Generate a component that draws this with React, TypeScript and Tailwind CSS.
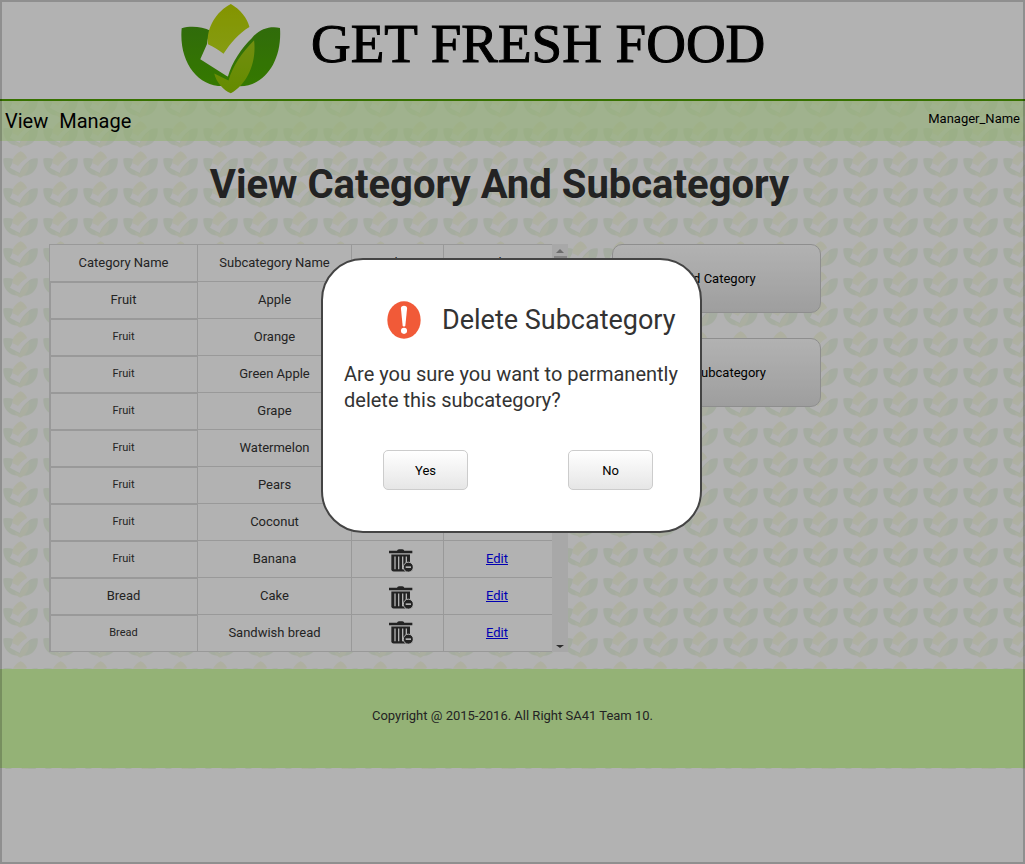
const rows = [
  { category: "Fruit", name: "Apple", large: true },
  { category: "Fruit", name: "Orange" },
  { category: "Fruit", name: "Green Apple" },
  { category: "Fruit", name: "Grape" },
  { category: "Fruit", name: "Watermelon" },
  { category: "Fruit", name: "Pears" },
  { category: "Fruit", name: "Coconut", raised: true },
  { category: "Fruit", name: "Banana" },
  { category: "Bread", name: "Cake", large: true },
  { category: "Bread", name: "Sandwish bread", raised: true },
];

// Leaf shapes of the brand mark, drawn in a 302 x 274 box that starts at 60,6.
function Leaves() {
  return (
    <>
      <path
        fill="url(#wing)"
        d="M64 82 C92 74 125 77 152 90 C144 105 141 118 140 130 L120 175 L203 228 L190 256 C110 258 55 180 64 82 Z"
      />
      <path fill="url(#wing)" d="M360 81 C367 180 315 255 240 257 L200 240 L162 216 L203 228 C215 185 245 140 275 112 C298 84 328 75 360 81 Z" />
      <path fill="url(#crown)" d="M212 9 C240 25 262 52 268 78 C235 98 212 125 190 159 C175 147 160 138 143 130 C138 80 168 32 212 9 Z" />
      <path fill="url(#bud)" d="M282 118 C290 185 262 250 212 278 C190 268 168 245 162 218 L205 239 C218 195 245 155 282 118 Z" />
    </>
  );
}

function Logo() {
  return (
    <svg viewBox="60 6 302 274" className="h-[91px] w-[101px] shrink-0" aria-hidden="true">
      <defs>
        <linearGradient id="wing" x1="0" y1="0" x2="0" y2="1">
          <stop offset="0" stopColor="#469a10" />
          <stop offset="1" stopColor="#4cae00" />
        </linearGradient>
        <linearGradient id="crown" x1="0" y1="0" x2="0" y2="1">
          <stop offset="0" stopColor="#bcd400" />
          <stop offset="1" stopColor="#c0e01a" />
        </linearGradient>
        <linearGradient id="bud" x1="0" y1="0" x2="0" y2="1">
          <stop offset="0" stopColor="#a4cc18" />
          <stop offset="1" stopColor="#90c800" />
        </linearGradient>
      </defs>
      <Leaves />
    </svg>
  );
}

function LeafPattern() {
  return (
    <svg className="absolute inset-0 -z-10 h-full w-full" aria-hidden="true">
      <defs>
        <pattern id="leaves" width="40" height="30" y="-10" patternUnits="userSpaceOnUse">
          <svg x="3" y="0" width="35" height="27" viewBox="60 6 302 274" preserveAspectRatio="none" opacity="0.1">
            <Leaves />
          </svg>
        </pattern>
      </defs>
      <rect width="100%" height="100%" fill="url(#leaves)" />
    </svg>
  );
}

function TrashIcon() {
  return (
    <svg viewBox="0 0 72 68" className="h-[23px] w-6" aria-hidden="true">
      <g fill="#333">
        <path d="M24 5 Q25 0 30 0 H40 Q45 0 46 5 H70 V12 H0 V5 Z" />
        <path d="M7 16 H63 V60 Q63 67 56 67 H14 Q7 67 7 60 Z" />
      </g>
      <path stroke="#fff" strokeWidth="4" d="M18 22 V60 M29 22 V60 M41 22 V60 M52 22 V42" />
      <circle cx="58" cy="54" r="15" fill="#333" stroke="#fff" strokeWidth="3" />
      <path stroke="#fff" strokeWidth="5" d="M50 54 H66" />
    </svg>
  );
}

function Scrollbar() {
  return (
    <div className="flex w-4 flex-col items-center bg-[#f1f1f1]" aria-hidden="true">
      <svg viewBox="0 0 16 12" className="h-3 w-4">
        <path d="M4 9 L8 5 L12 9 Z" fill="#9a9a9a" />
      </svg>
      <div className="h-48 w-[13px] bg-[#c1c1c1]" />
      <svg viewBox="0 0 16 12" className="mt-auto h-3 w-4">
        <path d="M4 5 L8 8 L12 5 Z" fill="#404040" />
      </svg>
    </div>
  );
}

function SubcategoryTable() {
  return (
    <div className="flex w-[519px] shrink-0">
      <table className="w-[503px] table-fixed border-separate border-spacing-0 border-l border-t border-[#dcdcdc] bg-white text-center text-[13px] leading-5">
        <colgroup>
          <col className="w-[148px]" />
          <col className="w-[154px]" />
          <col className="w-[92px]" />
          <col />
        </colgroup>
        <thead>
          <tr className="h-[37px]">
            <th className="border-b border-r border-[#dcdcdc] p-0 font-normal">Category Name</th>
            <th className="border-b border-r border-[#dcdcdc] p-0 font-normal">Subcategory Name</th>
            <th className="border-b border-r border-[#dcdcdc] p-0 font-normal">Delete</th>
            <th className="border-b border-[#dcdcdc] p-0 font-normal">Edit</th>
          </tr>
        </thead>
        <tbody>
          {rows.map((row) => (
            <tr key={row.name} className="h-[37px]">
              <td className={`border-b border-r border-[#dcdcdc] p-0 shadow-[inset_1px_1px_0_#dcdcdc] ${row.large ? "text-[13px]" : "text-[11px]"}`}>
                {row.category}
              </td>
              <td className="border-b border-r border-[#dcdcdc] p-0">{row.name}</td>
              <td className="border-b border-r border-[#dcdcdc] p-0">
                <button
                  type="button"
                  aria-label={`Delete ${row.name}`}
                  className={`block w-full pl-[6px] ${row.raised ? "pb-[2px]" : "pt-[3px]"}`}
                >
                  <span className="flex justify-center">
                    <TrashIcon />
                  </span>
                </button>
              </td>
              <td className="border-b border-[#dcdcdc] p-0 pr-[2px]">
                <a href="#edit" className="text-[#0000ff] underline">
                  Edit
                </a>
              </td>
            </tr>
          ))}
        </tbody>
      </table>
      <Scrollbar />
    </div>
  );
}

function SideButton({ label }: { label: string }) {
  return (
    <button
      type="button"
      className="h-[69px] w-[209px] rounded-[10px] border border-[#cccccc] bg-linear-to-b from-white to-[#e3e3e3] text-[13px] text-black"
    >
      {label}
    </button>
  );
}

function DialogButton({ label }: { label: string }) {
  return (
    <button
      type="button"
      className="h-10 w-[85px] rounded-[5px] border border-[#cccccc] bg-linear-to-b from-white to-[#e6e6e6] pt-[2px] text-[13px] text-black"
    >
      {label}
    </button>
  );
}

function AlertIcon() {
  return (
    <svg viewBox="0 0 100 112" preserveAspectRatio="none" className="h-[38px] w-[34px] shrink-0" aria-hidden="true">
      <ellipse cx="50" cy="56" rx="49" ry="55" fill="#f15a38" />
      <path fill="#fff" d="M41 22 Q41 14 50 14 Q59 14 59 22 L54 72 Q50 79 46 72 Z" />
      <circle cx="50" cy="88" r="9" fill="#fff" />
    </svg>
  );
}

function DeleteDialog() {
  return (
    <div className="fixed inset-0 flex items-start justify-center border-2 border-black/20 bg-black/30 pr-[2px] pt-64">
      <div
        role="dialog"
        aria-modal="true"
        aria-labelledby="dialog-title"
        className="w-[381px] rounded-[42px] border-2 border-[#444444] bg-white px-5 pb-[41px] pt-10"
      >
        <div className="flex items-center gap-[21px] pl-11">
          <AlertIcon />
          <h2 id="dialog-title" className="whitespace-nowrap text-[27px] leading-10">
            Delete Subcategory
          </h2>
        </div>
        <p className="mt-[21px] whitespace-nowrap pl-px text-[20px] leading-[26px]">
          Are you sure you want to permanently
          <br />
          delete this subcategory?
        </p>
        <div className="mt-[37px] flex gap-[100px] pl-10">
          <DialogButton label="Yes" />
          <DialogButton label="No" />
        </div>
      </div>
    </div>
  );
}

export default function App() {
  return (
    <div className="min-h-screen bg-white font-['Roboto',sans-serif] text-[#333333]">
      <header className="flex h-[101px] items-start border-b-2 border-[#4fa300] pl-[180px] pt-[3px]">
        <Logo />
        <span className="ml-[30px] mt-[9px] whitespace-nowrap font-['Liberation_Serif',serif] text-[55px] leading-[64px] text-black [-webkit-text-stroke:1px_black]">
          GET FRESH FOOD
        </span>
      </header>
      <div className="relative isolate pb-px">
        <LeafPattern />
        <nav className="flex h-10 items-center justify-between bg-[#d5ffaa]/60 px-[5px] text-black">
          <div className="flex gap-[11px] text-[20px]">
            <a href="#view">View</a>
            <a href="#manage">Manage</a>
          </div>
          <span className="pb-1 text-[13px]">Manager_Name</span>
        </nav>
        <main className="pb-[17px] pt-5">
          <h1 className="pr-[26px] text-center text-[40px] font-bold leading-[48px]">View Category And Subcategory</h1>
          <div className="mt-[35px] flex items-start gap-11 pl-[49px]">
            <SubcategoryTable />
            <div className="flex flex-col gap-[25px]">
              <SideButton label="Add Category" />
              <SideButton label="Add Subcategory" />
            </div>
          </div>
        </main>
        <footer className="bg-[#d5ffaa] pb-[42px] pt-[37px] text-center text-[13px] leading-5">
          Copyright @ 2015-2016. All Right SA41 Team 10.
        </footer>
      </div>
      <DeleteDialog />
    </div>
  );
}
